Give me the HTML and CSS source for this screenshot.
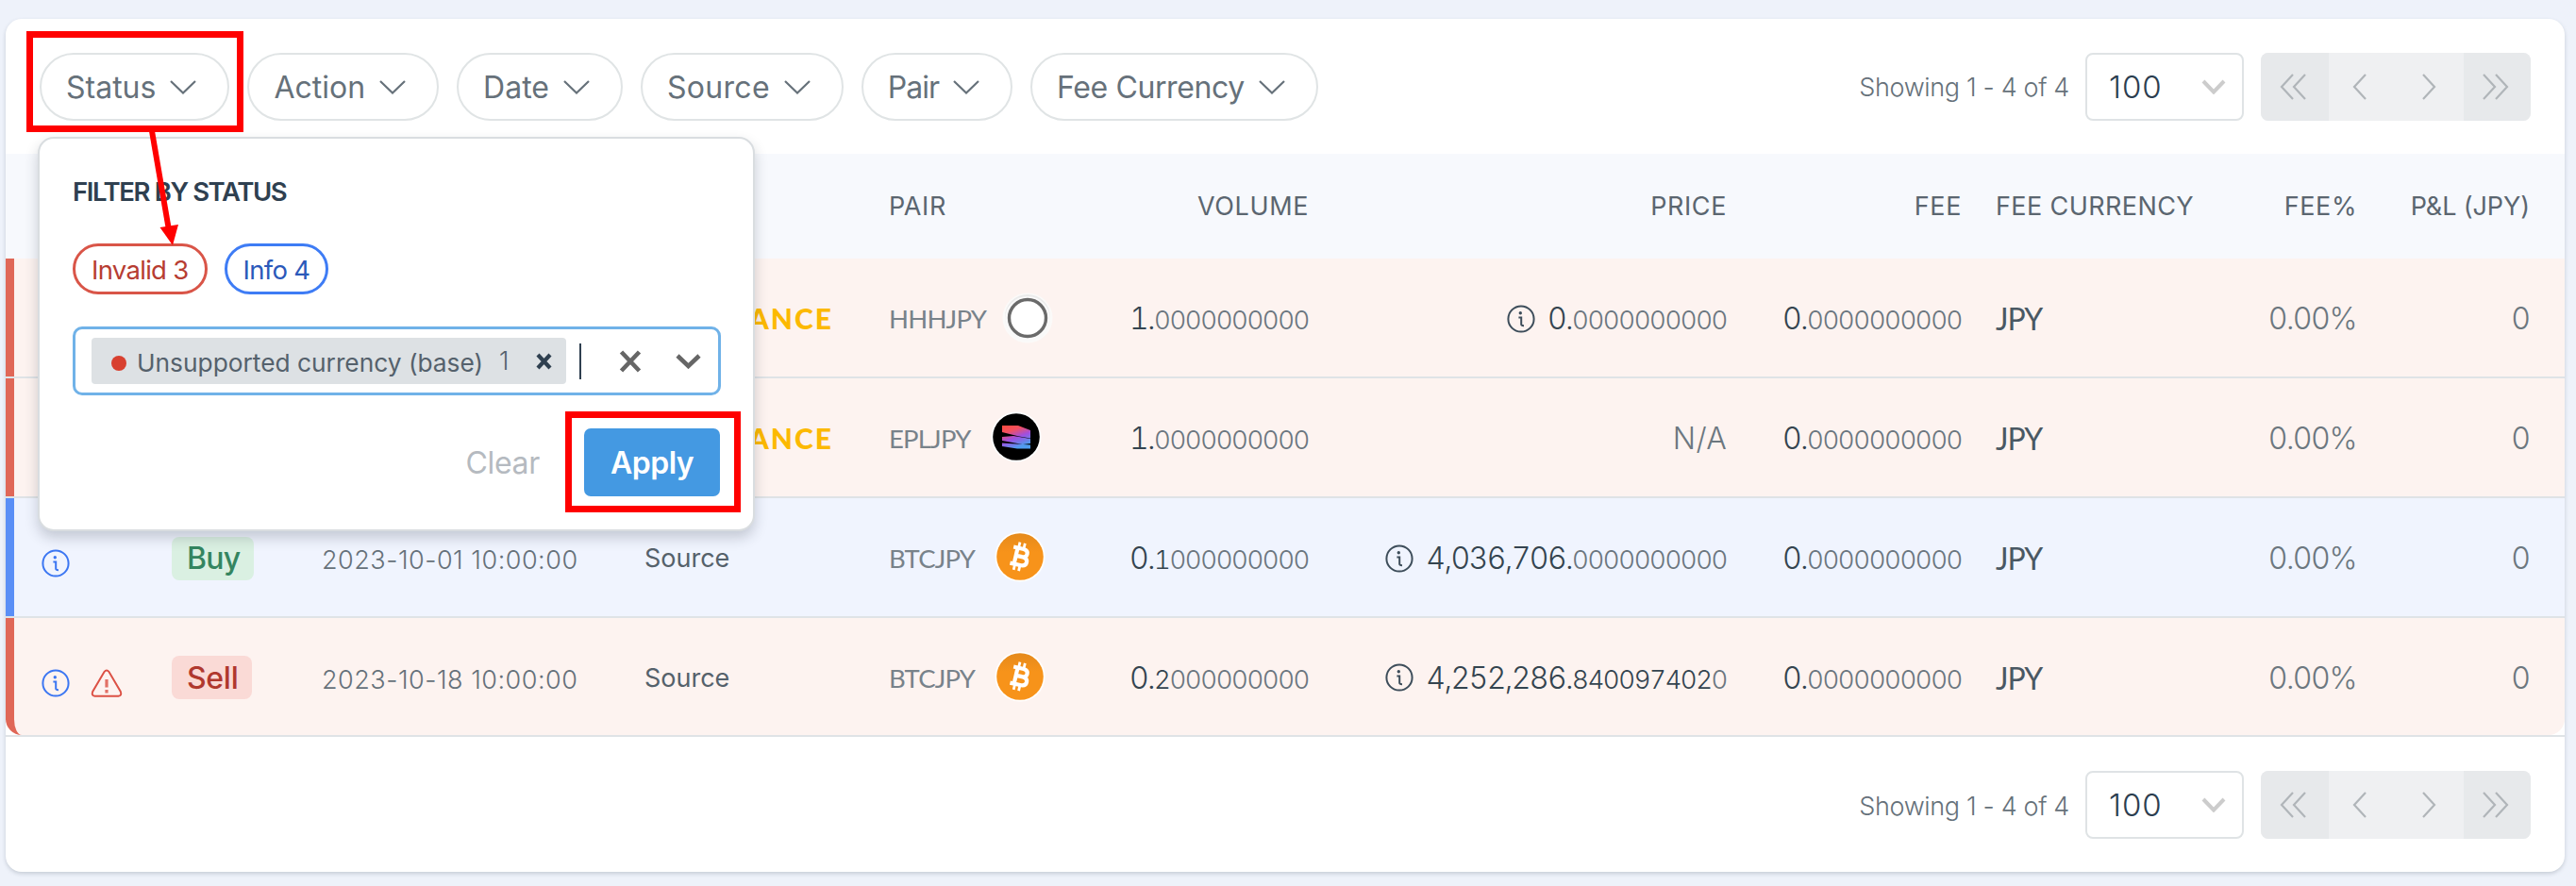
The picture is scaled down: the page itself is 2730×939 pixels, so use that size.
FILE: index.html
```
<!DOCTYPE html>
<html lang="en">
<head>
<meta charset="utf-8">
<title>Transactions</title>
<link rel="stylesheet" href="styles.css">
</head>
<body>
<svg class="defs" aria-hidden="true">
  <defs>
    <linearGradient id="flame" x1="0" y1="0" x2="0.45" y2="1">
      <stop offset="0" stop-color="#ff4b3e"/><stop offset="0.3" stop-color="#f4505f"/><stop offset="0.62" stop-color="#a04fe0"/><stop offset="1" stop-color="#4f9df0"/>
    </linearGradient>
    <linearGradient id="orange" x1="0" y1="0" x2="0" y2="1">
      <stop offset="0" stop-color="#e58a1c"/><stop offset="0.4" stop-color="#f7931a"/>
    </linearGradient>
    <symbol id="chev" viewBox="0 0 28 15"><path d="M1 1 L14 13.5 L27 1" fill="none" stroke="currentColor" stroke-width="2.2"/></symbol>
    <symbol id="info" viewBox="0 0 30 30"><circle cx="15" cy="15" r="13.6" fill="none" stroke="currentColor" stroke-width="2"/><circle cx="14.3" cy="8.8" r="1.7" fill="currentColor"/><path d="M12.4 13.6h2.8l0 7.2q0 1.4 2.8 1.4" fill="none" stroke="currentColor" stroke-width="2"/></symbol>
    <symbol id="warn" viewBox="0 0 34 30"><path d="M14.5 3 Q17 -0.2 19.5 3 L31.8 24 Q33.4 28.4 29.5 28.8 H4.5 Q0.6 28.4 2.2 24 Z" fill="none" stroke="currentColor" stroke-width="2"/><path d="M17 11v8.5M17 22v3.6" stroke="currentColor" stroke-width="3.2" opacity=".8"/></symbol>
    <symbol id="btc" viewBox="0 0 54 54"><circle cx="27" cy="27" r="26.5" fill="#fff"/><circle cx="27" cy="27" r="24.8" fill="url(#orange)"/>
      <g transform="rotate(13 27 27)" fill="none" stroke="#fff"><path d="M22.5 18v18M18 18.3h11q4.8 .3 4.8 4.2t-4.8 4.2h-6M23 26.8h7.2q5 .4 5 4.5t-5 4.5h-12" stroke-width="4.2"/><path d="M23.5 12v5M29 12v5M23.5 37v5M29 37v5" stroke-width="2.8"/></g></symbol>
    <symbol id="left" viewBox="0 0 15 28"><path d="M14 1 L2 14 L14 27" fill="none" stroke="currentColor" stroke-width="2.2"/></symbol>
    <symbol id="left2" viewBox="0 0 28 28"><path d="M14 1 L2 14 L14 27 M27 1 L15 14 L27 27" fill="none" stroke="currentColor" stroke-width="2.2"/></symbol>
  </defs>
</svg>

<main class="card">
  <div class="toolbar">
    <div class="filters">
      <button class="pill">Status<svg class="chev"><use href="#chev"/></svg></button>
      <button class="pill">Action<svg class="chev"><use href="#chev"/></svg></button>
      <button class="pill">Date<svg class="chev"><use href="#chev"/></svg></button>
      <button class="pill pill-source">Source<svg class="chev"><use href="#chev"/></svg></button>
      <button class="pill pill-pair">Pair<svg class="chev"><use href="#chev"/></svg></button>
      <button class="pill pill-wide">Fee Currency<svg class="chev"><use href="#chev"/></svg></button>
    </div>
    <div class="pager">
      <span class="showing">Showing 1 - 4 of 4</span>
      <div class="size">100<svg class="size-chev" viewBox="0 0 26 16"><path d="M2 2 L13 13.5 L24 2"/></svg></div>
      <div class="nav"><span class="edge"><svg class="dbl"><use href="#left2"/></svg></span><span><svg class="sgl"><use href="#left"/></svg></span><span><svg class="sgl flip"><use href="#left"/></svg></span><span class="edge"><svg class="dbl flip"><use href="#left2"/></svg></span></div>
    </div>
  </div>

  <div class="grid head">
    <div></div><div></div><div></div><div></div>
    <div>PAIR</div><div class="r">VOLUME</div><div class="r">PRICE</div><div class="r">FEE</div><div class="cur">FEE CURRENCY</div><div class="r">FEE%</div><div class="r pl">P&amp;L (JPY)</div>
  </div>

  <div class="row"><div class="grid line red">
    <div></div><div></div><div></div><div class="brand">ANCE</div>
    <div class="pair">HHHJPY<svg class="coin coin-h" viewBox="0 0 54 54"><circle cx="27" cy="27" r="26.5" fill="#fbfaf9"/><circle cx="27" cy="26" r="24" fill="#ebebeb"/><circle cx="27" cy="28" r="24" fill="#f9f9f9"/><circle cx="27" cy="27" r="19.5" fill="#fff" stroke="#6a6a6a" stroke-width="3.4"/></svg></div>
    <div class="num"><b>1.</b><i>0000000000</i></div>
    <div class="num"><svg class="info"><use href="#info"/></svg><b>0.</b><i>0000000000</i></div>
    <div class="num"><b>0.</b><i>0000000000</i></div>
    <div class="cur jpy">JPY</div><div class="r pct">0.00%</div><div class="r pct">0</div>
  </div></div>

  <div class="row"><div class="grid line red">
    <div></div><div></div><div></div><div class="brand">ANCE</div>
    <div class="pair">EPLJPY<svg class="coin" viewBox="0 0 54 54"><circle cx="27" cy="27" r="26.5" fill="#fff"/><circle cx="27" cy="27" r="24.8" fill="#000"/><path d="M12 15 H29 L42 20 V28.5 L30 26.5 L12 22 Z M12 27 L24 26 L42 29 V34 L34 35 L12 31 Z M12 33.5 L42 35.5 V39.5 H28 L12 37 Z" fill="url(#flame)"/></svg></div>
    <div class="num"><b>1.</b><i>0000000000</i></div>
    <div class="r na">N/A</div>
    <div class="num"><b>0.</b><i>0000000000</i></div>
    <div class="cur jpy">JPY</div><div class="r pct">0.00%</div><div class="r pct">0</div>
  </div></div>

  <div class="row"><div class="grid line blue">
    <div class="marks"><svg class="info"><use href="#info"/></svg></div><div><span class="badge buy">Buy</span></div><div class="date">2023-10-01 10:00:00</div><div class="source">Source</div>
    <div class="pair">BTCJPY<svg class="coin"><use href="#btc"/></svg></div>
    <div class="num"><b>0.</b><em>1</em><i>000000000</i></div>
    <div class="num"><svg class="info"><use href="#info"/></svg><b>4,036,706.</b><i>0000000000</i></div>
    <div class="num"><b>0.</b><i>0000000000</i></div>
    <div class="cur jpy">JPY</div><div class="r pct">0.00%</div><div class="r pct">0</div>
  </div></div>

  <div class="row row-last"><div class="grid line red">
    <div class="marks"><svg class="info"><use href="#info"/></svg><svg class="warn"><use href="#warn"/></svg></div><div><span class="badge sell">Sell</span></div><div class="date">2023-10-18 10:00:00</div><div class="source">Source</div>
    <div class="pair">BTCJPY<svg class="coin"><use href="#btc"/></svg></div>
    <div class="num"><b>0.</b><em>2</em><i>000000000</i></div>
    <div class="num"><svg class="info"><use href="#info"/></svg><b>4,252,286.</b><em>840097402</em><i>0</i></div>
    <div class="num"><b>0.</b><i>0000000000</i></div>
    <div class="cur jpy">JPY</div><div class="r pct">0.00%</div><div class="r pct">0</div>
  </div></div>

  <div class="footer">
    <div class="pager">
      <span class="showing">Showing 1 - 4 of 4</span>
      <div class="size">100<svg class="size-chev" viewBox="0 0 26 16"><path d="M2 2 L13 13.5 L24 2"/></svg></div>
      <div class="nav"><span class="edge"><svg class="dbl"><use href="#left2"/></svg></span><span><svg class="sgl"><use href="#left"/></svg></span><span><svg class="sgl flip"><use href="#left"/></svg></span><span class="edge"><svg class="dbl flip"><use href="#left2"/></svg></span></div>
    </div>
  </div>
</main>

<section class="popup">
  <h2 class="popup-title">FILTER BY STATUS</h2>
  <div class="chips"><span class="chip chip-red">Invalid 3</span><span class="chip chip-blue">Info 4</span></div>
  <div class="select">
    <div class="tag"><span class="dot"></span><span class="tag-text">Unsupported currency (base)</span><span class="count">1</span><svg class="tag-x" viewBox="0 0 17 18"><path d="M2 2 L15 16 M15 2 L2 16"/></svg></div>
    <span class="caret"></span>
    <svg class="clear-x" viewBox="0 0 24 24"><path d="M2.5 2 L21.5 22 M21.5 2 L2.5 22"/></svg>
    <svg class="drop" viewBox="0 0 27 17"><path d="M2 3 L13.5 14 L25 3"/></svg>
  </div>
  <div class="actions"><span class="clear">Clear</span><button class="apply">Apply</button></div>
</section>

<div class="mark mark-status"></div>
<div class="mark mark-apply"></div>
<svg class="arrow" viewBox="0 0 40 130"><path d="M7 5 L24.5 107" stroke="#f00" stroke-width="6"/><path d="M15.5 107 L35 104 L29 126 Z" fill="#f00"/></svg>
</body>
</html>
```
FILE: styles.css
```
* { box-sizing: border-box; }
body {
  margin: 0;
  padding: 20px 12px 0 6px;
  height: 939px;
  overflow: hidden;
  background: #eef2fa;
  font-family: Inter, "Liberation Sans", sans-serif;
  color: #67727b;
}
svg { display: block; flex: none; }
.defs { position: absolute; width: 0; height: 0; }

.card {
  height: 904px;
  border-radius: 17px;
  background: #fff;
  box-shadow: 0 2px 4px rgba(60, 75, 90, .22);
}

/* toolbar */
.toolbar { height: 143px; display: flex; justify-content: space-between; align-items: flex-start; padding: 36px 36px 0; }
.filters { display: flex; gap: 19px; }
.pill {
  display: flex; align-items: center; gap: 15px;
  height: 72px; padding: 0 33px 0 26px;
  border: 2px solid #e0e4e5; border-radius: 36px; background: #fff;
  font: 400 32px Inter, sans-serif; color: #66717a;
  white-space: nowrap;
}
.pill-source { letter-spacing: .3px; }
.pill-pair { letter-spacing: -1px; }
.pill-wide { letter-spacing: -.4px; }
.chev { width: 28px; height: 15px; }

.pager { display: flex; align-items: center; }
.showing { font-size: 27px; font-weight: 300; letter-spacing: -.35px; color: #66717a; margin-right: 17px; }
.size {
  display: flex; align-items: center; justify-content: space-between;
  width: 168px; height: 72px; padding: 0 17px 0 23px; margin-right: 18px;
  border: 2px solid #dfe3e5; border-radius: 8px;
  font-size: 33px; font-weight: 300; letter-spacing: 1px; color: #2c3e50;
}
.size-chev { width: 26px; height: 16px; fill: none; stroke: #ccc; stroke-width: 4; }
.nav { display: flex; border-radius: 8px; overflow: hidden; background: #eff0f2; color: #b0b5b9; }
.nav span { width: 71.5px; height: 72px; display: flex; align-items: center; justify-content: center; }
.nav .edge { background: #e7e9eb; }
.dbl { width: 28px; height: 28px; margin-right: 4px; }
.sgl { width: 15px; height: 28px; margin-right: 6px; }
.flip { transform: scaleX(-1); margin-right: 0; }
.dbl.flip { margin-right: 3px; }

/* table */
.grid {
  display: grid; align-items: center;
  grid-template-columns: 176px 160px 341px 259px 239px 206px 443px 249px 281px 138px 183px;
}
.head { height: 111px; background: #f7f9fd; font-size: 27px; letter-spacing: .6px; color: #5b6670; }
.r { text-align: right; }
.head .pl { letter-spacing: -.1px; }
.cur { padding-left: 36px; }
.head .cur { letter-spacing: .4px; }
.row { border-bottom: 2px solid #dfe3e6; }
.line { height: 125px; border-left: 9px solid; grid-template-columns: 167px 160px 341px 259px 239px 206px 443px 249px 281px 138px 183px; padding-top: 2px; }
.red { background: #fdf3f0; border-color: #e06757; }
.blue { background: #f0f4fe; border-color: #5a8ff6; }
.row-last .line { height: 124px; border-radius: 0 0 17px 17px; }

.marks { display: flex; gap: 22px; align-items: center; padding: 11px 0 0 29px; color: #3b76f2; }
.warn { width: 34px; height: 30px; color: #dc5145; }
.info { width: 30px; height: 30px; }
.badge { display: inline-flex; align-items: center; height: 46px; padding: 0 15px 0 16px; border-radius: 8px; font-size: 32px; font-weight: 500; letter-spacing: -.8px; }
.buy { background: #daf0e2; color: #348560; }
.sell { background: #fadad6; color: #b0382e; letter-spacing: -.3px; }
.date { font-size: 27px; font-weight: 300; letter-spacing: .5px; color: #66717a; padding-top: 4px; margin-left: -1px; }
.source { font-size: 27px; color: #55616b; }
.brand { font: 900 30px Lato, sans-serif; letter-spacing: 2px; color: #fcb900; text-align: right; padding: 0 59px 2px 0; }
.pair { display: flex; align-items: center; font: 400 27.5px Lato, sans-serif; letter-spacing: -.8px; color: #78828a; }
.coin { width: 54px; height: 54px; margin: -3px 0 0 21px; }
.coin-h { margin: -1px 0 0 17px; }
.num { display: flex; justify-content: flex-end; align-items: baseline; color: #34444f; font-variant-numeric: tabular-nums; }
.num .info { align-self: center; margin-right: 13px; color: #3d4d5a; }
.num b { font-size: 32px; font-weight: 300; letter-spacing: -1.6px; }
.num i, .num em { font-size: 27.5px; font-style: normal; font-weight: 300; letter-spacing: -1.4px; }
.num i { color: #6b767f; }
.jpy { font: 400 32px Lato, sans-serif; letter-spacing: -1px; color: #4a5863; }
.pct { font-size: 32px; font-weight: 300; letter-spacing: -.6px; color: #6c777f; }
.na { font-size: 32px; font-weight: 300; letter-spacing: .3px; color: #6c777f; }

.footer { display: flex; justify-content: flex-end; padding: 36px 36px 0; }
.footer .showing { padding-top: 2px; }

/* status filter popup */
.popup {
  position: absolute; left: 40px; top: 145px; width: 760px; height: 418px;
  padding: 0 35px; border: 2px solid #d9dde0; border-radius: 17px; background: #fff;
  box-shadow: 0 7px 14px rgba(40, 50, 65, .22);
}
.popup-title { margin: 41px 0 0; font-size: 27.5px; line-height: 30px; font-weight: 600; letter-spacing: -1.4px; color: #2f4050; }
.chips { display: flex; gap: 18px; margin-top: 40px; }
.chip { height: 54px; padding: 0 17px; border: 3px solid; border-radius: 27px; font-size: 27.5px; line-height: 50px; letter-spacing: -.7px; }
.chip-red { border-color: #d95548; color: #b73d32; }
.chip-blue { border-color: #3e7cf5; color: #2b59ba; }
.select { display: flex; align-items: center; width: 687px; height: 73px; margin-top: 34px; padding-left: 17px; border: 3px solid #70b2e8; border-radius: 10px; }
.tag { display: flex; align-items: center; width: 503px; height: 49px; padding-left: 21px; border-radius: 4px; background: #dde1e4; font-size: 26.3px; color: #55616c; }
.dot { width: 16px; height: 16px; border-radius: 50%; background: #d8402f; margin: 4px 11px 0 0; }
.tag-text { width: 366px; white-space: nowrap; padding-top: 4px; }
.count { width: 14px; margin: 0 25px 0 18px; font-weight: 300; }
.tag-x { width: 17px; height: 18px; fill: none; stroke: #2f4050; stroke-width: 4.2; }
.caret { width: 2px; height: 38px; margin: 0 40px 0 14px; background: #2f4050; }
.clear-x { width: 24px; height: 24px; fill: none; stroke: #666; stroke-width: 4.6; }
.drop { width: 27px; height: 17px; margin-left: 36px; fill: none; stroke: #666; stroke-width: 4.6; }
.actions { display: flex; justify-content: flex-end; align-items: center; margin-top: 35px; }
.clear { font-size: 32px; font-weight: 400; letter-spacing: -.3px; color: #b5bac0; margin-right: 47px; }
.apply { width: 144px; height: 72px; border: 0; border-radius: 7px; background: #4499e2; color: #fff; font: 600 32px Inter, sans-serif; letter-spacing: -.5px; padding: 0; }

/* annotations */
.mark { position: absolute; border: 7px solid #f00; }
.mark-status { left: 28px; top: 33px; width: 230px; height: 107px; }
.mark-apply { left: 599px; top: 436px; width: 186px; height: 107px; }
.arrow { position: absolute; left: 154px; top: 134px; width: 40px; height: 130px; }
```
